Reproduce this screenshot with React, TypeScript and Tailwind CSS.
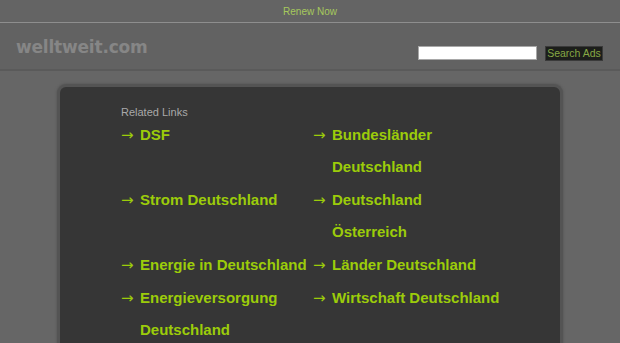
const LEFT_LINKS = ['DSF', 'Strom Deutschland', 'Energie in Deutschland', 'Energieversorgung Deutschland'];

const RIGHT_LINKS = ['Bundesländer Deutschland', 'Deutschland Österreich', 'Länder Deutschland', 'Wirtschaft Deutschland'];

function LinkItem({ label }: { label: string }) {
  return (
    <a href="#" className="flex items-start text-[#9ccc0a] hover:underline">
      <span className="w-[19px] shrink-0 leading-[32px] font-['DejaVu_Sans',sans-serif] font-normal text-[15px]">→</span>
      <span className="leading-[32px] max-w-[168px]">{label}</span>
    </a>
  );
}

export default function App() {
  // pair left/right items in rows so wrapped entries push the row down
  const rows = LEFT_LINKS.map((l, i) => [l, RIGHT_LINKS[i]]);

  return (
    <div className="min-h-[343px] bg-[#666666] font-['Liberation_Sans',Arial,sans-serif] overflow-hidden">
      {/* top bar */}
      <div className="h-[23px] bg-[#646464] border-b border-[#8e8e8e] flex items-center justify-center">
        <a href="#" className="text-[10px] text-[#a6c95c] leading-none mt-[2px]">Renew Now</a>
      </div>

      {/* header */}
      <div className="h-[48px] bg-[#626262] border-b-2 border-[#5a5a5a] flex items-center justify-between pl-[16px] pr-[17px]">
        <div className="font-['DejaVu_Sans',Verdana,sans-serif] font-bold text-[17px] text-[#868686] tracking-[-0.2px] mt-[4px]">
          welltweit.com
        </div>
        <div className="flex items-center gap-[8px] mt-[14px]">
          <input
            type="text"
            className="w-[119px] h-[14px] bg-white border border-[#a8a8a8] outline-none"
          />
          <button className="w-[58px] h-[15px] bg-[#1c1e1b] border border-[#3a3a3a] text-[10.5px] leading-none text-[#86a844] flex items-center justify-center">
            Search Ads
          </button>
        </div>
      </div>

      {/* content panel */}
      <div className="pt-[13px] flex justify-center">
        <div className="w-[506px] rounded-t-[9px] border-[3px] border-b-0 border-[#545454] shadow-[0_0_2px_1px_#5c5c5c] bg-[#363636] h-[300px] pl-[61px] pt-[20px]">
          <div className="text-[11px] text-[#a9a9a9] leading-none mb-[1px]">Related Links</div>
          <div className="text-[15px] font-bold">
            {rows.map(([left, right]) => (
              <div key={left} className="flex pb-[1px]">
                <div className="w-[192px]">
                  <LinkItem label={left} />
                </div>
                <div className="w-[192px]">
                  <LinkItem label={right} />
                </div>
              </div>
            ))}
          </div>
        </div>
      </div>
    </div>
  );
}
